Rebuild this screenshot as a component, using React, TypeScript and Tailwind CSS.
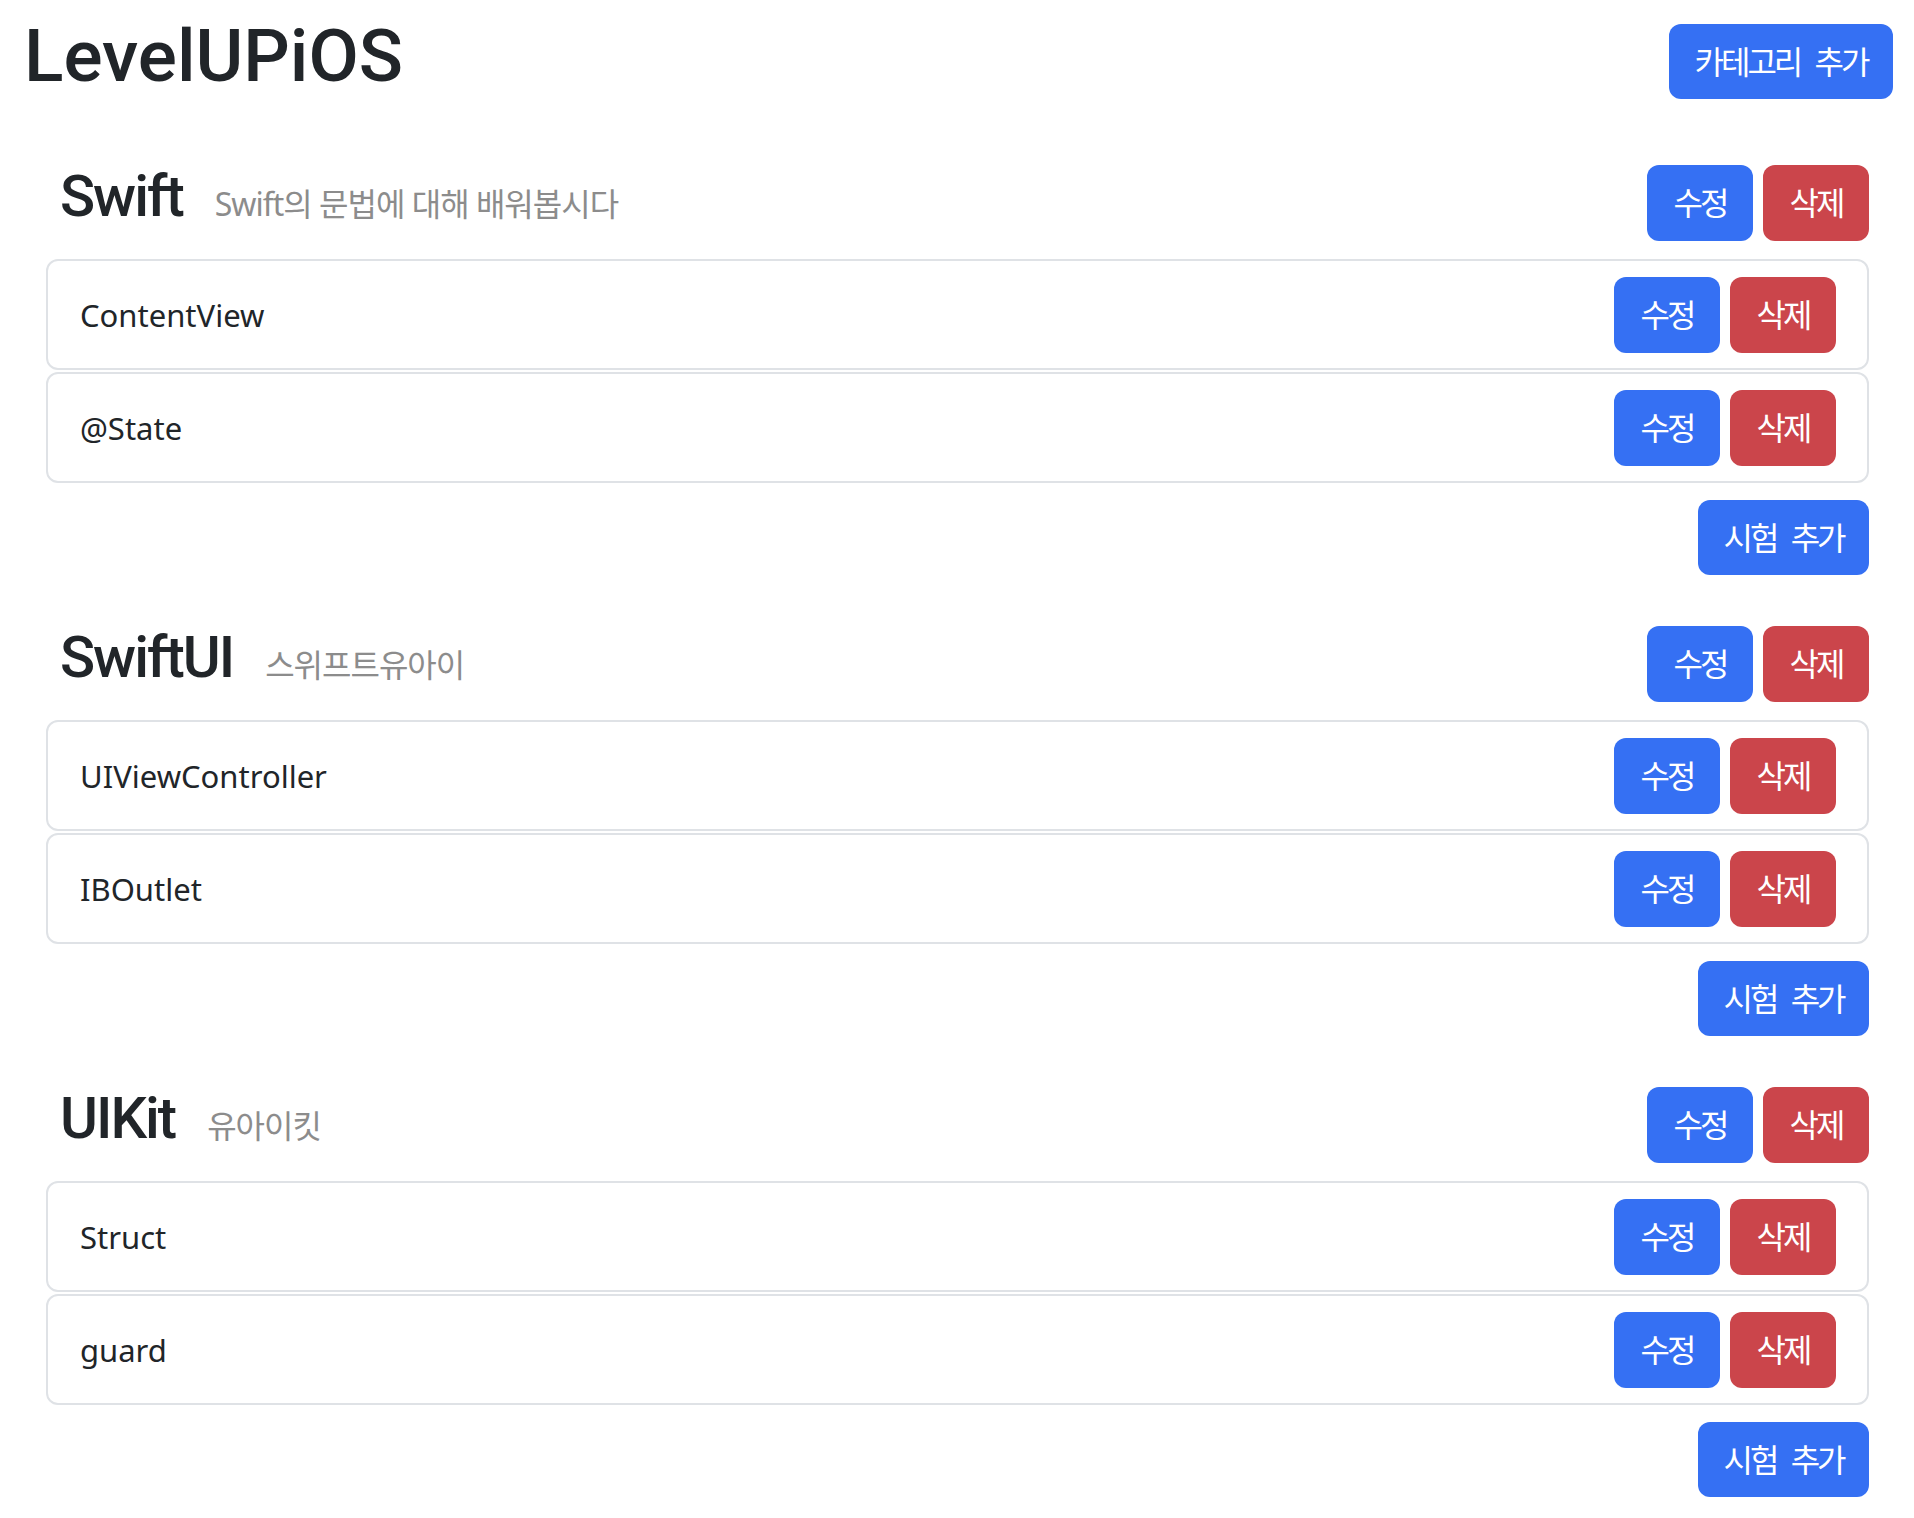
import React from "react";

// A single quiz/test entry inside a category
interface Exam {
  id: number;
  title: string;
}

// A category holds a name, a short description and its exams
interface Category {
  id: number;
  name: string;
  description: string;
  exams: Exam[];
}

const categories: Category[] = [
  {
    id: 1,
    name: "Swift",
    description: "Swift의 문법에 대해 배워봅시다",
    exams: [
      { id: 1, title: "ContentView" },
      { id: 2, title: "@State" },
    ],
  },
  {
    id: 2,
    name: "SwiftUI",
    description: "스위프트유아이",
    exams: [
      { id: 3, title: "UIViewController" },
      { id: 4, title: "IBOutlet" },
    ],
  },
  {
    id: 3,
    name: "UIKit",
    description: "유아이킷",
    exams: [
      { id: 5, title: "Struct" },
      { id: 6, title: "guard" },
    ],
  },
];

const koFont = "font-['Noto_Sans','Noto_Sans_CJK_KR',sans-serif]";
const btnText = `${koFont} text-white text-[32px] tracking-[-3px] [word-spacing:9px] leading-none rounded-[12px]`;

// blue / red buttons, sized like the bootstrap ones in the original page
const EditButton = () => (
  <button className={`${btnText} w-[106px] h-[76px] bg-[#3570f3]`}>수정</button>
);

const DeleteButton = () => (
  <button className={`${btnText} w-[106px] h-[76px] bg-[#cb454b]`}>삭제</button>
);

const CategorySection: React.FC<{ category: Category; first: boolean }> = ({
  category,
  first,
}) => {
  return (
    <section className={`ml-[22px] mr-[24px] ${first ? "mt-[66px]" : "mt-[51px]"}`}>
      {/* Category title + actions */}
      <div className="flex items-start justify-between">
        <div className="flex items-baseline pt-[2px] pl-[14px]">
          <h2 className="font-['Roboto','Liberation_Sans',sans-serif] font-medium text-[58px] leading-none tracking-[-2px] text-[#212529]">
            {category.name}
          </h2>
          <span
            className={`${koFont} ml-[32px] text-[32px] leading-none tracking-[-1px] text-[#8c8c8c]`}
          >
            {category.description}
          </span>
        </div>
        <div className="flex gap-[10px]">
          <EditButton />
          <DeleteButton />
        </div>
      </div>

      {/* Exam list */}
      <div className="mt-[18px] flex flex-col gap-[2px]">
        {category.exams.map((exam) => (
          <div
            key={exam.id}
            className="flex items-center justify-between border-2 border-[#dfe2e6] rounded-[12px] pt-[16px] pb-[15px] pl-[32px] pr-[31px]"
          >
            <span className="font-['Noto_Sans',sans-serif] text-[31px] text-[#212529]">
              {exam.title}
            </span>
            <div className="flex gap-[10px]">
              <EditButton />
              <DeleteButton />
            </div>
          </div>
        ))}
      </div>

      <div className="flex justify-end mt-[17px]">
        <button className={`${btnText} w-[171px] h-[75px] bg-[#3570f3]`}>시험 추가</button>
      </div>
    </section>
  );
};

export default function App() {
  return (
    <div className="min-h-screen bg-white pl-[24px] pr-[21px] pb-[23px]">
      <header className="flex items-start justify-between pt-[20px]">
        <h1 className="font-['Roboto','Liberation_Sans',sans-serif] font-medium text-[73px] leading-none text-[#212529]">
          LevelUPiOS
        </h1>
        <button className={`${btnText} mt-[4px] w-[224px] h-[75px] bg-[#3570f3]`}>
          카테고리 추가
        </button>
      </header>

      {categories.map((category, i) => (
        <CategorySection key={category.id} category={category} first={i === 0} />
      ))}
    </div>
  );
}
